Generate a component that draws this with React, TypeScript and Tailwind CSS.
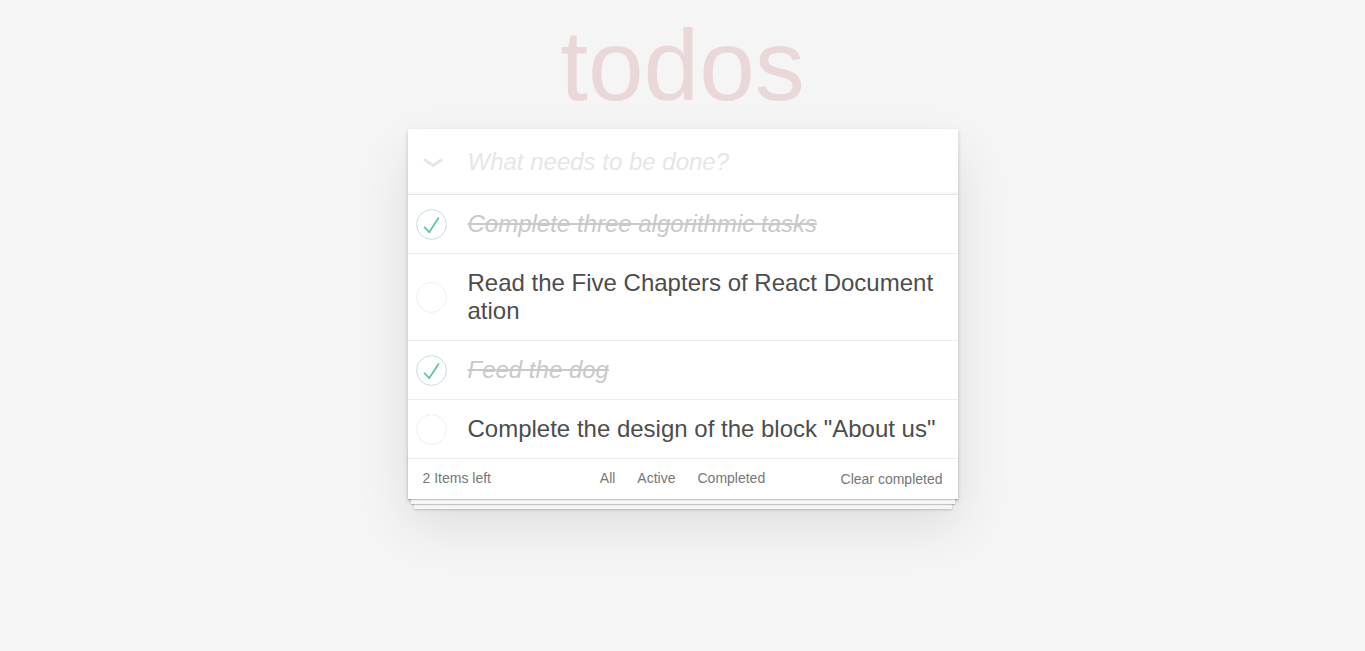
import React from "react";

type Todo = { text: string; done: boolean };

const todos: Todo[] = [
  { text: "Complete three algorithmic tasks", done: true },
  { text: "Read the Five Chapters of React Documentation", done: false },
  { text: "Feed the dog", done: true },
  { text: 'Complete the design of the block "About us"', done: false },
];

function Check({ done }: { done: boolean }) {
  return (
    <svg width="31" height="31" viewBox="-2 -2 104 104" className="block">
      <circle cx="50" cy="50" r="50" fill="none" stroke={done ? "#bddad5" : "#ededed"} strokeWidth="3" />
      {done && <path fill="#5dc2af" d="M72 25L42 71 27 56l-4 4 20 20 34-52z" />}
    </svg>
  );
}

export default function App() {
  return (
    <div
      className="min-h-screen bg-[#f5f5f5] text-[#4d4d4d] pt-[15px]"
      style={{ fontFamily: '"Liberation Sans", Arial, Helvetica, sans-serif' }}
    >
      <h1 className="text-center text-[100px] leading-[100px] h-[100px] font-thin text-[rgba(175,47,47,0.15)] mb-[14px]">
        todos
      </h1>
      <div className="relative mx-auto w-[550px] bg-white shadow-[0_2px_4px_0_rgba(0,0,0,0.2),0_25px_50px_0_rgba(0,0,0,0.1)]">
        <header className="flex items-center h-[65px] shadow-[inset_0_-2px_1px_rgba(0,0,0,0.03)]">
          <div className="w-[60px] flex justify-start pl-[14px] pt-[1px]">
            <svg width="22" height="11" viewBox="0 0 22 11">
              <path d="M2 2.5 L11 8.5 L20 2.5" fill="none" stroke="#e6e6e6" strokeWidth="3" />
            </svg>
          </div>
          <input
            className="flex-1 h-full pr-[16px] text-[24px] italic outline-none bg-transparent placeholder:text-[#e6e6e6] placeholder:italic"
            placeholder="What needs to be done?"
          />
        </header>
        <ul className="border-t border-[#e6e6e6]">
          {todos.map((t, i) => (
            <li key={i} className="flex items-center border-b border-[#ededed] text-[24px]">
              <div className="w-[60px] pl-[8px] flex items-center">
                <Check done={t.done} />
              </div>
              <label
                className={
                  "flex-1 pt-[15px] pb-[15px] pr-[15px] leading-[28px] break-all " +
                  (t.done ? "italic line-through text-[#c9c9c9]" : "text-[#4d4d4d]")
                }
              >
                {t.text}
              </label>
            </li>
          ))}
        </ul>
        <footer className="relative grid grid-cols-[1fr_auto_1fr] items-center h-[40px] px-[15px] pb-[2px] text-[14px] text-[#777] before:content-[''] before:absolute before:left-0 before:right-0 before:bottom-0 before:h-[50px] before:overflow-hidden before:shadow-[0_1px_1px_rgba(0,0,0,0.2),0_8px_0_-3px_#f6f6f6,0_9px_1px_-3px_rgba(0,0,0,0.2),0_16px_0_-6px_#f6f6f6,0_17px_2px_-6px_rgba(0,0,0,0.2)]">
          <span className="leading-[20px]">2 Items left</span>
          <ul className="flex leading-[20px]">
            {["All", "Active", "Completed"].map((f) => (
              <li key={f}>
                <a className="block mx-[3px] px-[7px] py-[3px] border border-transparent rounded-[3px]">{f}</a>
              </li>
            ))}
          </ul>
          <span className="justify-self-end leading-[20px] pt-[2px]">Clear completed</span>
        </footer>
      </div>
    </div>
  );
}
